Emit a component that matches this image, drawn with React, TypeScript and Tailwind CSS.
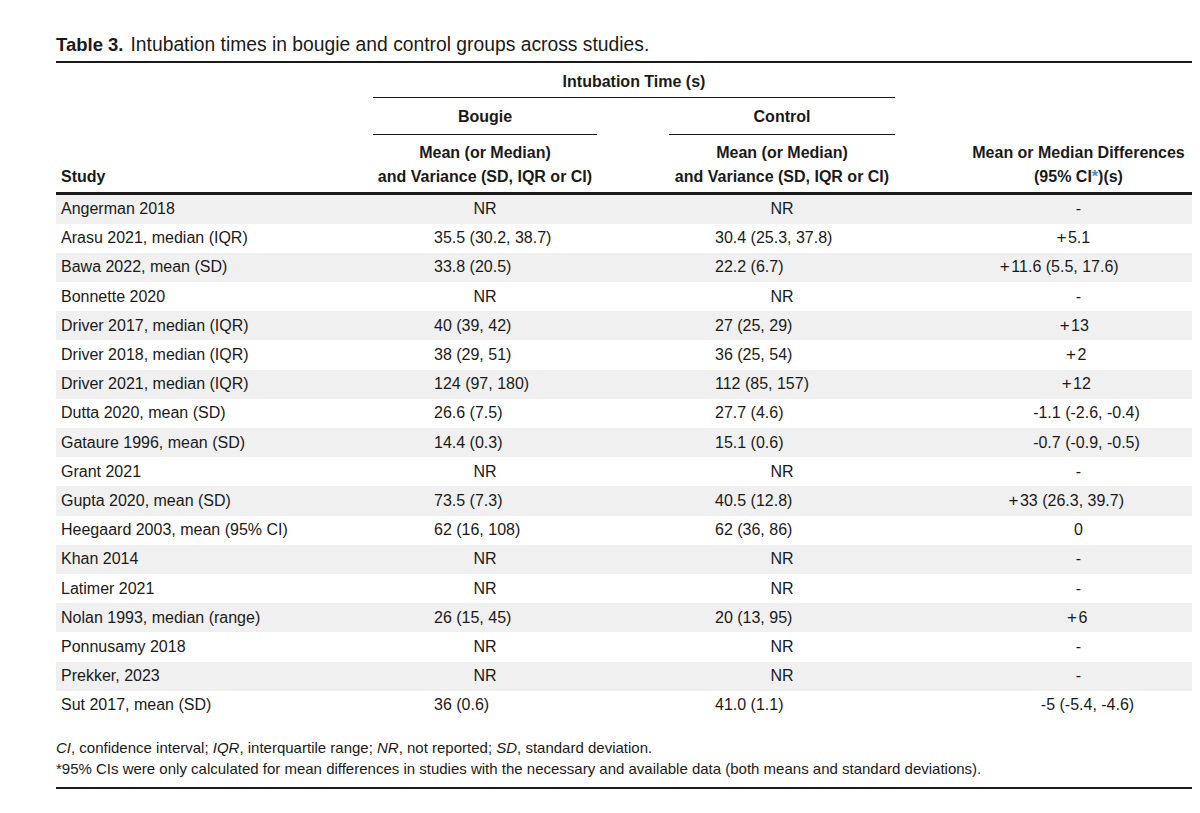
import React from "react";

type Row = {
  study: string;
  b: string;
  c: string;
  d: string;
  dp: string;
};

const rows: Row[] = [
  { study: "Angerman 2018", b: "NR", c: "NR", d: "-", dp: "pl-[70px]" },
  { study: "Arasu 2021, median (IQR)", b: "35.5 (30.2, 38.7)", c: "30.4 (25.3, 37.8)", d: "+5.1", dp: "pl-[58px]" },
  { study: "Bawa 2022, mean (SD)", b: "33.8 (20.5)", c: "22.2 (6.7)", d: "+11.6 (5.5, 17.6)", dp: "pl-[30px]" },
  { study: "Bonnette 2020", b: "NR", c: "NR", d: "-", dp: "pl-[70px]" },
  { study: "Driver 2017, median (IQR)", b: "40 (39, 42)", c: "27 (25, 29)", d: "+13", dp: "pl-[60px]" },
  { study: "Driver 2018, median (IQR)", b: "38 (29, 51)", c: "36 (25, 54)", d: "+2", dp: "pl-[64px]" },
  { study: "Driver 2021, median (IQR)", b: "124 (97, 180)", c: "112 (85, 157)", d: "+12", dp: "pl-[64px]" },
  { study: "Dutta 2020, mean (SD)", b: "26.6 (7.5)", c: "27.7 (4.6)", d: "-1.1 (-2.6, -0.4)", dp: "pl-[86px]" },
  { study: "Gataure 1996, mean (SD)", b: "14.4 (0.3)", c: "15.1 (0.6)", d: "-0.7 (-0.9, -0.5)", dp: "pl-[86px]" },
  { study: "Grant 2021", b: "NR", c: "NR", d: "-", dp: "pl-[70px]" },
  { study: "Gupta 2020, mean (SD)", b: "73.5 (7.3)", c: "40.5 (12.8)", d: "+33 (26.3, 39.7)", dp: "pl-[44px]" },
  { study: "Heegaard 2003, mean (95% CI)", b: "62 (16, 108)", c: "62 (36, 86)", d: "0", dp: "pl-[70px]" },
  { study: "Khan 2014", b: "NR", c: "NR", d: "-", dp: "pl-[70px]" },
  { study: "Latimer 2021", b: "NR", c: "NR", d: "-", dp: "pl-[70px]" },
  { study: "Nolan 1993, median (range)", b: "26 (15, 45)", c: "20 (13, 95)", d: "+6", dp: "pl-[66px]" },
  { study: "Ponnusamy 2018", b: "NR", c: "NR", d: "-", dp: "pl-[70px]" },
  { study: "Prekker, 2023", b: "NR", c: "NR", d: "-", dp: "pl-[70px]" },
  { study: "Sut 2017, mean (SD)", b: "36 (0.6)", c: "41.0 (1.1)", d: "-5 (-5.4, -4.6)", dp: "pl-[88px]" },
];

const cols = "grid grid-cols-[317px_224px_72px_226px_297px]";

function Cell({ value, numPad }: { value: string; numPad: string }) {
  if (value === "NR") {
    return <div className="flex items-center justify-center">NR</div>;
  }
  return <div className={`flex items-center ${numPad}`}>{value}</div>;
}

function Diff({ value }: { value: string }) {
  if (value.startsWith("+")) {
    return (
      <span>
        <span className="inline-block w-[13px] text-center text-[17px]">+</span>
        {value.slice(1)}
      </span>
    );
  }
  return <span>{value}</span>;
}

export default function App() {
  return (
    <div
      className="w-[1200px] h-[813px] bg-white text-[#1a1a1a] overflow-hidden"
      style={{ fontFamily: '"Liberation Sans", Arial, sans-serif' }}
    >
      <div className="ml-[56px] w-[1136px] pt-[33px]">
        {/* Title */}
        <div className="leading-[24px] h-[28px] whitespace-nowrap">
          <span className="font-bold text-[18.5px]">Table 3.</span>
          <span className="ml-[7px] text-[19.3px]">Intubation times in bougie and control groups across studies.</span>
        </div>
        <div className="h-[2px] bg-[#1a1a1a]" />

        {/* Header */}
        <div className={`${cols} grid-rows-[35px_37px_57px] font-bold text-[16px]`}>
          <div className="row-start-1 row-end-4 col-start-1 flex flex-col justify-end pl-[5px] pb-[3px] leading-[24px]">
            Study
          </div>
          <div className="row-start-1 col-start-2 col-end-5 border-b-[1.5px] border-[#1a1a1a] text-center pt-[8px] leading-[22px]">
            Intubation Time (s)
          </div>
          <div className="row-start-2 col-start-2 border-b-[1.5px] border-[#1a1a1a] text-center pt-[8px] leading-[22px]">
            Bougie
          </div>
          <div className="row-start-2 col-start-4 border-b-[1.5px] border-[#1a1a1a] text-center pt-[8px] leading-[22px]">
            Control
          </div>
          <div className="row-start-3 col-start-2 text-center pt-[6px] leading-[24px]">
            <div>Mean (or Median)</div>
            <div>and Variance (SD, IQR or CI)</div>
          </div>
          <div className="row-start-3 col-start-4 text-center pt-[6px] leading-[24px]">
            <div>Mean (or Median)</div>
            <div>and Variance (SD, IQR or CI)</div>
          </div>
          <div className="row-start-1 row-end-4 col-start-5 flex flex-col justify-end text-center pl-[70px] pb-[3px] leading-[24px]">
            <div>Mean or Median Differences</div>
            <div>
              (95% CI<span className="text-[#3a8fc4]">*</span>)(s)
            </div>
          </div>
        </div>
        <div className="h-[2.5px] bg-[#1a1a1a]" />

        {/* Body */}
        <div className="text-[16px] leading-[20px]">
          {rows.map((r, i) => (
            <div
              key={r.study}
              className={`${cols} h-[29.2px] ${i % 2 === 0 ? "bg-[#f0f0f0]" : "bg-white"}`}
            >
              <div className="flex items-center pl-[5px]">{r.study}</div>
              <Cell value={r.b} numPad="pl-[61px]" />
              <div />
              <Cell value={r.c} numPad="pl-[46px]" />
              <div className={`flex items-center justify-center ${r.dp}`}>
                <Diff value={r.d} />
              </div>
            </div>
          ))}
        </div>

        {/* Footnotes */}
        <div className="pt-[17px] pb-[8px] text-[15px] leading-[21px] whitespace-nowrap">
          <div>
            <i>CI</i>, confidence interval; <i>IQR</i>, interquartile range; <i>NR</i>, not reported;{" "}
            <i>SD</i>, standard deviation.
          </div>
          <div>
            *95% CIs were only calculated for mean differences in studies with the necessary and available data
            (both means and standard deviations).
          </div>
        </div>
        <div className="h-[2px] bg-[#1a1a1a]" />
      </div>
    </div>
  );
}
